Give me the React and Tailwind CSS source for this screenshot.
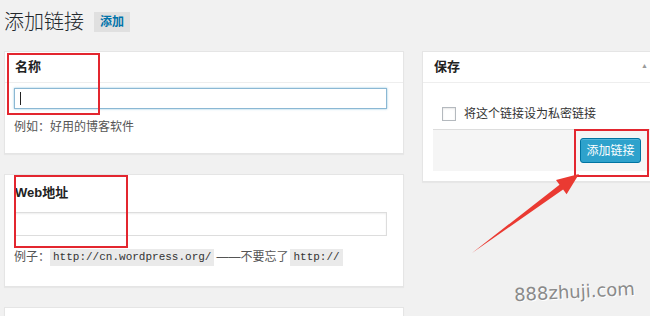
import React from 'react'

const cjk = { fontFamily: '"Liberation Sans", "Noto Sans CJK SC", sans-serif' }
const mono = { fontFamily: '"Liberation Mono", "DejaVu Sans Mono", monospace' }

const Card = ({ className = '', children }) => (
  <div className={`bg-white border border-[#e5e5e5] shadow-[0_1px_1px_rgba(0,0,0,0.04)] ${className}`}>
    {children}
  </div>
)

const App = () => {
  return (
    <div className="relative w-[650px] h-[316px] overflow-hidden bg-[#f1f1f1] text-[#444]" style={cjk}>
      {/* title row */}
      <div className="flex items-center gap-[10px] pl-[4px] pt-[10px] h-[34px]">
        <h1 className="text-[20px] leading-[24px] font-light text-[#23282d]">添加链接</h1>
        <span className="bg-[#e0e0e0] text-[#0073aa] text-[12px] font-bold px-[6px] py-[3px] leading-[14px]">添加</span>
      </div>

      <div className="flex gap-[18px] pl-[4px] pt-[17px]">
        {/* left column */}
        <div className="flex flex-col gap-[20px] w-[400px] shrink-0">
          <Card className="h-[103px]">
            <div className="h-[31px] border-b border-[#eeeeee] flex items-center pl-[10px]">
              <span className="text-[13px] font-bold text-[#222]">名称</span>
            </div>
            <div className="px-[9px] pt-[5px]">
              <div className="w-[373px] h-[21px] border border-[#8bb8d4] bg-white shadow-[0_0_2px_rgba(30,140,190,0.5)] flex items-center pl-[5px]">
                <span className="w-px h-[13px] bg-[#222]" />
              </div>
              <p className="text-[12px] leading-[18px] mt-[9px] text-[#555]">例如：好用的博客软件</p>
            </div>
          </Card>

          <Card className="h-[113px]">
            <div className="h-[34px] flex items-center pl-[10px] pt-[2px]">
              <span className="text-[13px] font-bold text-[#222]">Web地址</span>
            </div>
            <div className="px-[9px] pt-[3px]">
              <div className="w-[373px] h-[24px] border border-[#dddddd] bg-white shadow-[inset_0_1px_2px_rgba(0,0,0,0.07)]" />
              <p className="flex items-center text-[12px] leading-[18px] mt-[12px] text-[#555]">
                <span>例子：</span>
                <code className="bg-[#eaeaea] px-[3px] text-[11px] leading-[17px] text-[#333]" style={mono}>http://cn.wordpress.org/</code>
                <span className="ml-[2px]">——不要忘了</span>
                <code className="bg-[#eaeaea] px-[3px] ml-[2px] text-[11px] leading-[17px] text-[#333]" style={mono}>http://</code>
              </p>
            </div>
          </Card>

          <Card className="h-[40px]" />
        </div>

        {/* right column */}
        <Card className="w-[240px] shrink-0 h-[131px] self-start">
          <div className="relative h-[31px] border-b border-[#eeeeee] flex items-center pl-[11px]">
            <span className="text-[13px] font-bold text-[#222]">保存</span>
            <span className="absolute left-[218px] top-[9px] text-[7px] text-[#999]">▲</span>
          </div>
          <div className="px-[10px]">
            <label className="flex items-start gap-[8px] pl-[9px] pt-[24px] h-[46px]">
              <span className="w-[14px] h-[14px] border border-[#b4b9be] bg-white shadow-[inset_0_1px_2px_rgba(0,0,0,0.1)]" />
              <span className="text-[12px] leading-[14px] text-[#333]">将这个链接设为私密链接</span>
            </label>
            <div className="h-[42px] bg-[#f5f5f5] border-t border-[#dddddd] flex items-center justify-end pr-[10px]">
              <button className="w-[61px] h-[25px] bg-[#2ea2cc] border border-[#0074a2] rounded-[3px] text-white text-[12px] shadow-[inset_0_1px_0_rgba(120,200,230,0.5)]">
                添加链接
              </button>
            </div>
          </div>
        </Card>
      </div>

      {/* annotations */}
      <div className="absolute left-[7px] top-[53px] w-[93px] h-[62px] border-2 border-[#e3262f]" />
      <div className="absolute left-[14px] top-[175px] w-[114px] h-[73px] border-2 border-[#e3262f]" />
      <div className="absolute left-[574px] top-[129px] w-[75px] h-[48px] border-2 border-[#e3262f]" />
      <svg className="absolute left-0 top-0" width="650" height="316" viewBox="0 0 650 316">
        <polygon
          points="472,253 563.1,189.5 566.6,194.3 579,174 556,179.9 559.5,184.7"
          fill="#ea3a32"
        />
      </svg>
      <div
        className="absolute left-[514px] top-[281px] text-[18px] leading-[22px] text-[#8a8a8a] -rotate-3"
        style={{ fontFamily: '"DejaVu Sans", sans-serif', textShadow: '1px 1px 0 #fff' }}
      >
        888zhuji.com
      </div>
    </div>
  )
}

export default App
